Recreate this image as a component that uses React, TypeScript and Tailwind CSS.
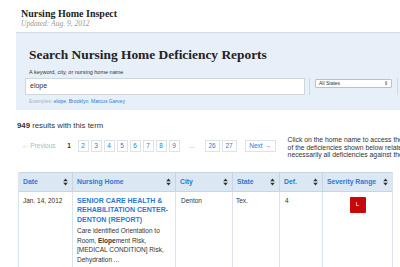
import React from "react";

const sans = { fontFamily: '"Liberation Sans", Arial, sans-serif' };
const serif = { fontFamily: '"Liberation Serif", "Times New Roman", serif' };

function SortIcon() {
  return (
    <svg width="5" height="8" viewBox="0 0 5 8" className="shrink-0">
      <path d="M2.5 0.5 L4.8 3.2 L0.2 3.2 Z" fill="#333" />
      <path d="M2.5 7.5 L4.8 4.8 L0.2 4.8 Z" fill="#333" />
    </svg>
  );
}

export default function App() {
  const pages = ["2", "3", "4", "5", "6", "7", "8", "9"];
  return (
    <div className="w-[400px] h-[267px] overflow-hidden bg-white text-[#333]" style={sans}>
      <div className="pl-[21px] pt-[8px]">
        <div className="text-[10px] font-bold leading-[12px] text-[#222]" style={serif}>
          Nursing Home Inspect
        </div>
        <div className="text-[7.5px] italic text-[#999] leading-[8px]" style={serif}>
          Updated: Aug. 9, 2012
        </div>
      </div>

      <div className="ml-[16px] mt-[4px] h-[78px] bg-[#e7eff8] border-t border-[#d5dce4] flex">
        <div className="pl-[13px] pt-[13px] flex flex-col">
          <div className="text-[13.4px] font-bold leading-[18px] text-[#222] whitespace-nowrap" style={serif}>
            Search Nursing Home Deficiency Reports
          </div>
          <div className="text-[5.5px] leading-[7px] mt-[5px] text-[#333]">A keyword, city, or nursing home name</div>
          <div className="-ml-[4px] mt-[2px] w-[280px] h-[17px] bg-white border border-[#cfd6de] flex items-center pl-[4px] text-[7px]">
            elope
          </div>
          <div className="text-[5px] leading-[6px] mt-[3px] text-[#aab4be] whitespace-nowrap">
            Examples: <span className="text-[#2a7ad5]">elope</span>, <span className="text-[#2a7ad5]">Brooklyn</span>, <span className="text-[#2a7ad5]">Marcus Garvey</span>
          </div>
        </div>
        <div className="ml-[4px] mt-[45px] h-[17px] w-px bg-[#d0d9e3]" />
        <div className="ml-[5px] mt-[46px] w-[77px] h-[9px] bg-white border border-[#b9c0c8] rounded-[1px] flex items-center justify-between px-[3px] text-[5px]">
          <span>All States</span>
          <span className="text-[5px] leading-[5px]">⇕</span>
        </div>
        <div className="ml-[5px] mt-[45px] h-[17px] w-px bg-[#d0d9e3]" />
      </div>

      <div className="pl-[17px] mt-[12px] text-[7.8px] leading-[8px] whitespace-nowrap">
        <b>949</b> results with this term
      </div>

      <div className="flex pl-[22px] items-start">
        <div className="flex items-center gap-[2px] mt-[9px] h-[13px] text-[6.5px]">
          <span className="text-[#b0b8c0] mr-[7px] whitespace-nowrap">← Previous</span>
          <span className="w-[9px] text-center font-bold mr-[2px]">1</span>
          {pages.map((p) => (
            <span key={p} className="w-[11px] h-[12px] border border-[#dde3ea] text-[#2a7ad5] flex items-center justify-center">{p}</span>
          ))}
          <span className="w-[21px] text-center text-[#999]">...</span>
          {["26", "27"].map((p) => (
            <span key={p} className="w-[15px] h-[12px] border border-[#dde3ea] text-[#2a7ad5] flex items-center justify-center">{p}</span>
          ))}
          <span className="ml-[6px] w-[31px] h-[12px] border border-[#dde3ea] text-[#2a7ad5] flex items-center justify-center whitespace-nowrap">Next →</span>
        </div>
        <div className="ml-[12px] mt-[6px] text-[6.8px] leading-[7.6px] whitespace-nowrap">
          Click on the home name to access the full report.<br />
          of the deficiencies shown below relate to the term,<br />
          necessarily all deficiencies against the home.
        </div>
      </div>

      <div className="ml-[18px] mt-[13px] w-[375px] border-x border-[#dde3ea]">
        <div className="flex h-[20px] bg-[#dbe7f3] border-y border-[#c9d5e1] text-[6.8px] font-bold text-[#2a7ad5]">
          {[
            ["Date", "w-[54px]"],
            ["Nursing Home", "w-[103px]"],
            ["City", "w-[57px]"],
            ["State", "w-[47px]"],
            ["Def.", "w-[43px]"],
            ["Severity Range", "flex-1"],
          ].map(([label, w], i) => (
            <div key={label} className={`${w} flex items-center justify-between pl-[4px] pr-[4px] ${i < 5 ? "border-r border-[#c9d5e1]" : ""}`}>
              <span className="whitespace-nowrap">{label}</span>
              <SortIcon />
            </div>
          ))}
        </div>
        <div className="flex h-[80px] text-[6.5px] leading-[9.7px]">
          <div className="w-[54px] border-r border-[#dde3ea] pl-[4px] pt-[4px] whitespace-nowrap">Jan. 14, 2012</div>
          <div className="w-[103px] border-r border-[#dde3ea] pl-[4px] pr-[2px] pt-[4px]">
            <div className="font-bold text-[#2a7ad5] text-[7px] leading-[9.7px] whitespace-nowrap">
              SENIOR CARE HEALTH &amp;<br />REHABILITATION CENTER-<br />DENTON (REPORT)
            </div>
            <div className="whitespace-nowrap mt-px">
              Care identified Orientation to<br />Room, <b>Elope</b>ment Risk,<br />[MEDICAL CONDITION] Risk,<br />Dehydration ...
            </div>
          </div>
          <div className="w-[57px] border-r border-[#dde3ea] pl-[5px] pt-[4px]">Denton</div>
          <div className="w-[47px] border-r border-[#dde3ea] pl-[3px] pt-[4px]">Tex.</div>
          <div className="w-[43px] border-r border-[#dde3ea] pl-[5px] pt-[4px]">4</div>
          <div className="flex-1 flex justify-center pt-[5px]">
            <div className="w-[16px] h-[16px] bg-[#c8070a] rounded-[1px] text-white text-[6px] flex items-center justify-center">L</div>
          </div>
        </div>
      </div>
    </div>
  );
}
